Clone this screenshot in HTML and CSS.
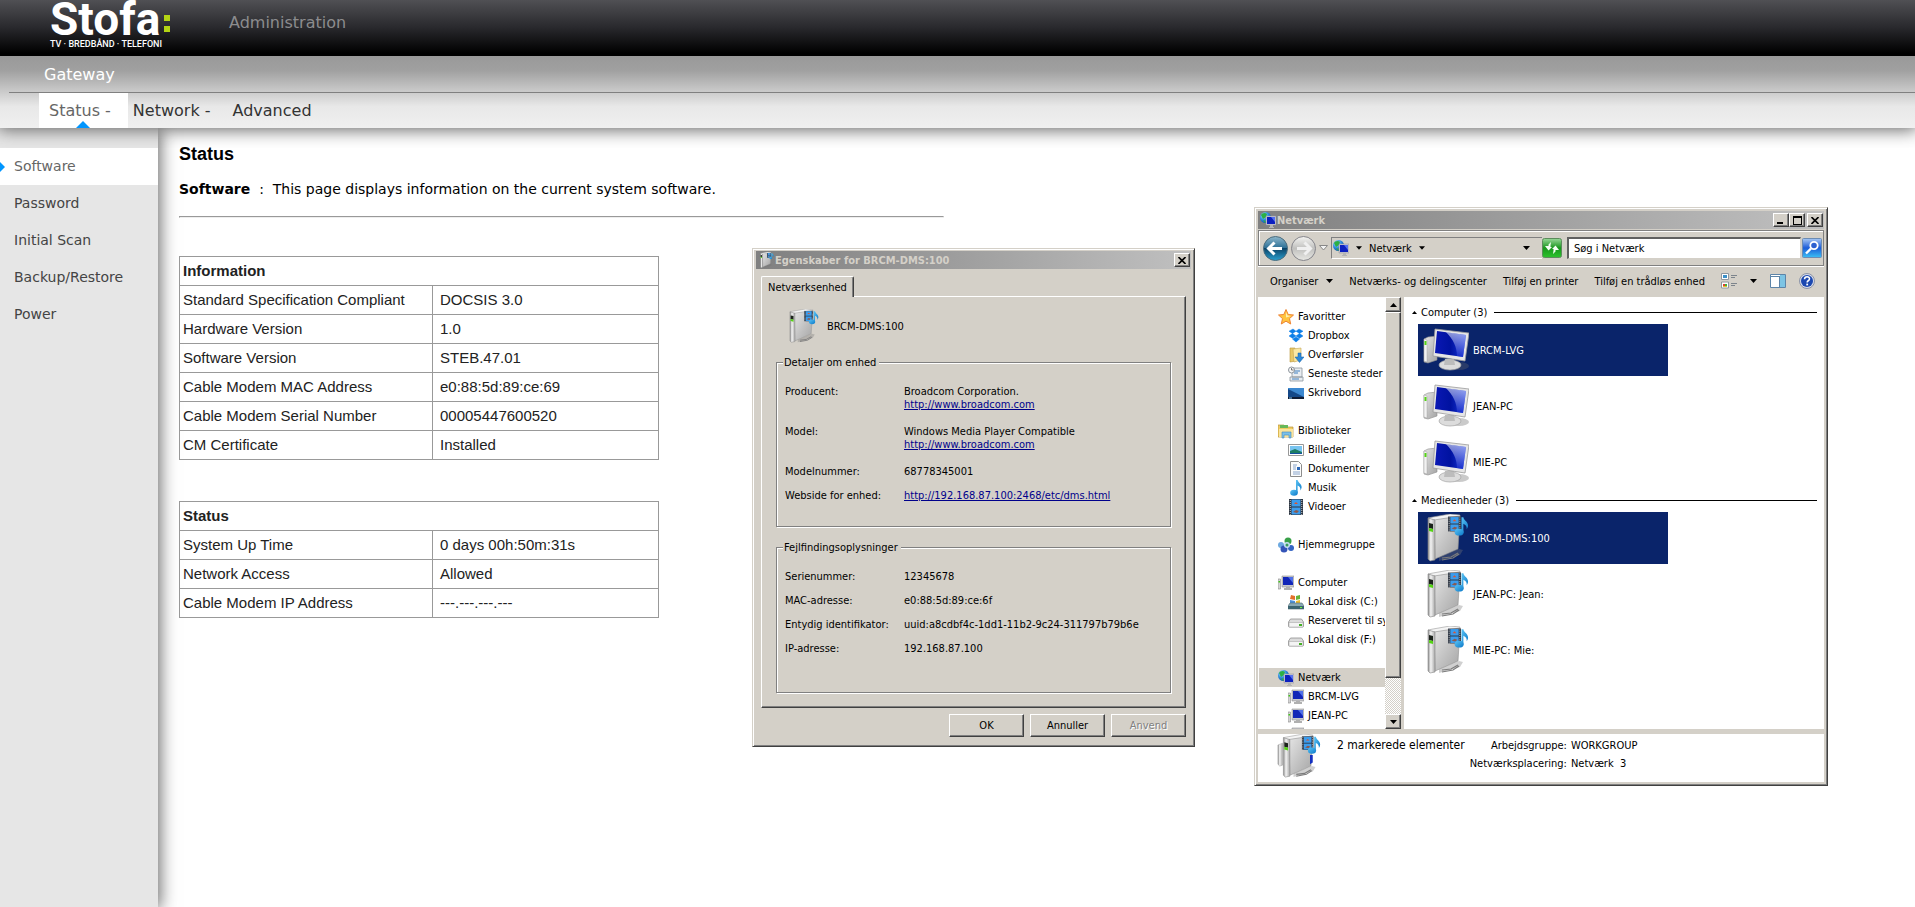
FILE: index.html
```
<!DOCTYPE html>
<html lang="da">
<head>
  <meta charset="UTF-8">
  <title>Stofa Gateway - Status</title>
  <link rel="stylesheet" href="styles.css">
</head>
<body>
  <!-- Icon set -->
  <svg class="defs" aria-hidden="true">
    <defs>
      <linearGradient id="g-case" x1="0" y1="0" x2="1" y2="1">
        <stop offset="0" stop-color="#e6e6e6"/><stop offset="0.5" stop-color="#c4c4c4"/><stop offset="1" stop-color="#a4a4a4"/>
      </linearGradient>
      <linearGradient id="g-side" x1="0" y1="0" x2="1" y2="0">
        <stop offset="0" stop-color="#8c8c8c"/><stop offset="0.4" stop-color="#f4f4f4"/><stop offset="1" stop-color="#a8a8a8"/>
      </linearGradient>
      <linearGradient id="g-screen" x1="0" y1="0" x2="1" y2="0">
        <stop offset="0" stop-color="#0a18b4"/><stop offset="0.5" stop-color="#0012a0"/><stop offset="1" stop-color="#1a3ae0"/>
      </linearGradient>
      <linearGradient id="g-glare" x1="0" y1="0" x2="0" y2="1">
        <stop offset="0" stop-color="#f0f4ff"/><stop offset="1" stop-color="#1a30d0"/>
      </linearGradient>
      <linearGradient id="g-note" x1="0" y1="0" x2="1" y2="1">
        <stop offset="0" stop-color="#5cc4f4"/><stop offset="1" stop-color="#0a78c8"/>
      </linearGradient>
      <radialGradient id="g-globe" cx="0.35" cy="0.3" r="0.8">
        <stop offset="0" stop-color="#bfeaff"/><stop offset="0.5" stop-color="#2e8fe0"/><stop offset="1" stop-color="#0a4aa0"/>
      </radialGradient>
      <linearGradient id="g-back" x1="0" y1="0" x2="0" y2="1">
        <stop offset="0" stop-color="#8fb8cc"/><stop offset="0.48" stop-color="#2c6f96"/><stop offset="0.5" stop-color="#0c4468"/><stop offset="1" stop-color="#2aa0d0"/>
      </linearGradient>
      <linearGradient id="g-fwd" x1="0" y1="0" x2="0" y2="1">
        <stop offset="0" stop-color="#f4f4f2"/><stop offset="0.5" stop-color="#c0c0be"/><stop offset="1" stop-color="#e8e8e4"/>
      </linearGradient>
      <linearGradient id="g-green" x1="0" y1="0" x2="0" y2="1">
        <stop offset="0" stop-color="#9ad89a"/><stop offset="0.5" stop-color="#18961c"/><stop offset="1" stop-color="#2cc42c"/>
      </linearGradient>
      <linearGradient id="g-blue" x1="0" y1="0" x2="0" y2="1">
        <stop offset="0" stop-color="#a8c8f4"/><stop offset="0.5" stop-color="#1c5cd8"/><stop offset="1" stop-color="#3cc0f4"/>
      </linearGradient>
    </defs>

    <symbol id="i-film" viewBox="0 0 14 16">
      <rect width="14" height="16" fill="#2c3440"/>
      <rect x="2.500" y=".5" width="9" height="7" fill="#3c9cec"/><rect x="2.500" y="8.500" width="9" height="7" fill="#3c9cec"/>
      <path d="M5 5l2-2 2 2z" fill="#e0542c"/><path d="M4 13l3-2 3 1-2 2z" fill="#8a5a50"/>
      <path d="M1.250 1v15M12.750 1v15" stroke="#e8ecf0" stroke-width=".8" stroke-dasharray="1 1"/>
    </symbol>
    <symbol id="i-note" viewBox="0 0 16 20">
      <path d="M8 0h2c.5 3.500 5.500 5 5 9.500-.2 1.500-.8 2.500-1.500 3.500.5-3-1-5-3.500-6v9H8z" fill="url(#g-note)"/>
      <ellipse cx="5.500" cy="16" rx="4.800" ry="3.700" fill="url(#g-note)"/>
    </symbol>
    <symbol id="i-media" viewBox="0 0 48 48">
      <path d="M18 47l21-6 3-5-4-1-20 8z" fill="#777" opacity=".35"/>
      <path d="M21 44l9-1 7-4M21 46l11-2 6-4" fill="none" stroke="#7c7c7c" stroke-width="1.200"/>
      <path d="M7 4l5-1 17-3 10 1v2L14 7z" fill="#f4f4f4" stroke="#9a9a9a" stroke-width=".6"/>
      <path d="M13 6l26-4-2 33-23 10z" fill="url(#g-case)" stroke="#8e8e8e" stroke-width=".6"/>
      <path d="M7 4l7 2v40l-5 1-2-2z" fill="url(#g-side)" stroke="#868686" stroke-width=".6"/>
      <path d="M8 9l4 1v5l-4-1z" fill="#1c221c"/>
      <path d="M8 14l4 1v3l-4-1z" fill="#54d414"/>
      <use href="#i-film" x="27" y="2" width="13" height="16"/>
      <use href="#i-note" x="33" y="2" width="15" height="21"/>
    </symbol>
    <symbol id="i-pc" viewBox="0 0 48 48">
      <ellipse cx="38" cy="40" rx="10" ry="4" fill="#666" opacity=".35"/>
      <path d="M3 13l4-2 9-1v24l-9 3-4-1z" fill="url(#g-case)" stroke="#8e8e8e" stroke-width=".6"/>
      <path d="M3 13l3 1v22l-3-1z" fill="#f2f2f2" stroke="#999" stroke-width=".4"/>
      <rect x="3.500" y="15" width="2" height="4" fill="#54d414"/>
      <ellipse cx="29" cy="39" rx="11" ry="5" fill="#dcdcdc" stroke="#a4a4a4" stroke-width=".7"/>
      <path d="M24 33h9l1 6H23z" fill="#bcbcbc"/>
      <path d="M14 3l34 4-4 28-32-5z" fill="#e6e6e6" stroke="#9a9a9a" stroke-width=".8"/>
      <path d="M16 5l29 4-3 22-28-4z" fill="url(#g-screen)"/>
      <path d="M25 6l20 3-3 22-6-1c0-9-4-17-11-24z" fill="url(#g-glare)" opacity=".6"/>
    </symbol>
    <symbol id="i-minipc" viewBox="0 0 16 16">
      <path d="M0 4h2.500v10H0z" fill="#d4d4d4" stroke="#888" stroke-width=".6"/><rect x=".5" y="6" width="1.500" height="1.500" fill="#3cc414"/>
      <path d="M4 1h12v11H4z" fill="#c8c8cc" stroke="#909090" stroke-width=".6"/>
      <path d="M5 2h10v8H5z" fill="#1226b8"/><path d="M10 2h5v6z" fill="#5070e8"/>
      <path d="M8 12h4v1h2v2H6v-2h2z" fill="#b0b0b0"/>
    </symbol>
    <symbol id="i-net" viewBox="0 0 16 16">
      <circle cx="5.500" cy="5.500" r="5.500" fill="url(#g-globe)"/>
      <path d="M1 3c1-2 4-3 6-1L6 5 3 7zM3 8l3 1-1 2z" fill="#2cb044"/>
      <path d="M6 4h10v9H6z" fill="#c8c8d4" stroke="#8c8c94" stroke-width=".5"/>
      <path d="M7 5h8v7H7z" fill="#0c20c0"/><path d="M11 5h4v5z" fill="#5470f0"/>
      <path d="M10 13h3v2h1v1H9v-1h1z" fill="#b4b4b4"/>
    </symbol>
    <symbol id="i-star" viewBox="0 0 16 16">
      <path d="M8 .5l2.200 5 5.300.5-4 3.600 1.200 5.400L8 12.200 3.300 15l1.200-5.400L.5 6l5.300-.5z" fill="#ffc440" stroke="#ee8434"/>
      <path d="M8 3l1.500 3.500L13 7 8 8.500z" fill="#fff0b4"/>
    </symbol>
    <symbol id="i-dropbox" viewBox="0 0 16 16">
      <path d="M5 1l3 2.200L4.500 5.500 1 3.200zM11 1l4 2.200-3.500 2.300L8 3.200zM4.500 5.500L8 8l-3.500 2.200L1 8zM11.500 5.500L15 8l-3.500 2.200L8 8zM4.500 11L8 9l3.500 2L8 14z" fill="#0c7ee8" stroke="#0c7ee8" stroke-width=".5"/>
    </symbol>
    <symbol id="i-download" viewBox="0 0 16 16">
      <path d="M2 1h5l1 13-6 1z" fill="#e8c868" stroke="#b89438" stroke-width=".6"/><path d="M5 2l8-1v12l-7 2z" fill="#fae8a4" stroke="#c4a454" stroke-width=".6"/>
      <path d="M10 6h3v4h3l-4.500 5.500L7 10h3z" fill="#2c88d8" stroke="#1460a8" stroke-width=".5"/>
    </symbol>
    <symbol id="i-recent" viewBox="0 0 16 16">
      <path d="M4 2h10v9H4zM2 11h13v4H2z" fill="#e8ecf0" stroke="#8c949c" stroke-width=".8"/><path d="M6 5h6M6 7h4M4 13h7" stroke="#4080c0"/>
      <circle cx="3.500" cy="4" r="3" fill="#f6f6f6" stroke="#8c949c"/><path d="M3.500 2v2h2" fill="none" stroke="#444" stroke-width=".7"/>
    </symbol>
    <symbol id="i-desktop" viewBox="0 0 16 16">
      <path d="M0 3h16v11H0z" fill="#144888"/><path d="M0 3h16v9L0 4z" fill="#3c88d0"/><path d="M0 12h16v2H0z" fill="#101c34"/><path d="M1 12.500h3v1H1z" fill="#7cc0f0"/>
    </symbol>
    <symbol id="i-library" viewBox="0 0 16 16">
      <path d="M0 2h6l1 2h8v10H0z" fill="#f0cc60" stroke="#b8943c" stroke-width=".7"/><path d="M2 2h8v3H2z" fill="#68b858"/>
      <path d="M1 6h14v8H1z" fill="#fae49c"/><path d="M4 15V9h9v6h-2v-3H6v3z" fill="#7cc0e8" stroke="#3c88c0" stroke-width=".6"/>
    </symbol>
    <symbol id="i-picture" viewBox="0 0 16 16">
      <path d="M.5 2.500h15v11H.5z" fill="#fff" stroke="#989898"/><path d="M2 4h12v8H2z" fill="#78c4f0"/><path d="M2 9l5-2 7 3v2H2z" fill="#1c7c64"/><path d="M2 11h12v1H2z" fill="#1450a0"/>
    </symbol>
    <symbol id="i-document" viewBox="0 0 16 16">
      <path d="M2.500 .5h8l3 3v12h-11z" fill="#fcfcfc" stroke="#8c8c8c"/><path d="M5 4h4M5 6h3M5 8h3M5 11h7M5 13h7" stroke="#6c90c0" stroke-width=".8"/><path d="M9 6h3v3H9z" fill="#2c68b8"/>
    </symbol>
    <symbol id="i-homegroup" viewBox="0 0 16 16">
      <circle cx="3" cy="8" r="3" fill="#6ca8e0"/><circle cx="10" cy="4" r="3.500" fill="#38a048"/><circle cx="6" cy="12" r="3.500" fill="#3454b8"/><circle cx="13" cy="11" r="3" fill="#3464c4"/>
      <circle cx="9" cy="8" r="3" fill="#c4dcf4"/><circle cx="9" cy="8" r="1.500" fill="#3c9c5c"/>
    </symbol>
    <symbol id="i-drivec" viewBox="0 0 16 16">
      <path d="M3 1l4 1v4L2 5z" fill="#e4702c"/><path d="M8 2l4-1v4l-4 1z" fill="#68b438"/><path d="M2 6l5 1v3H2z" fill="#4c90dc"/><path d="M8 7l4-1v4H8z" fill="#f0bc2c"/>
      <path d="M2 9h12l2 3v3H0v-3z" fill="#88a8b4" stroke="#50686f" stroke-width=".6"/><path d="M0 12h16v3H0z" fill="#3c6470"/><path d="M12 13h2v1h-2z" fill="#6cf03c"/>
    </symbol>
    <symbol id="i-drive" viewBox="0 0 16 16">
      <path d="M2.500 6h11l2 3v4q0 1-1 1h-13q-1 0-1-1V9z" fill="#dcdcdc" stroke="#909090" stroke-width=".8"/><path d="M1 9.500h14V14H1z" fill="#f4f4f4" stroke="#a0a0a0" stroke-width=".5"/><path d="M11 11h3v2h-3z" fill="#44b024"/>
    </symbol>
    <symbol id="i-down" viewBox="0 0 7 4"><path d="M0 0h7L3.500 4z"/></symbol>
    <symbol id="i-up" viewBox="0 0 7 4"><path d="M0 4h7L3.500 0z"/></symbol>
    <symbol id="i-close" viewBox="0 0 8 7"><path d="M.5 0l7 7M7.500 0l-7 7" stroke="#000" stroke-width="1.600"/></symbol>
    <symbol id="i-view" viewBox="0 0 16 16">
      <path d="M.5 .5h7v6h-7zM.5 9h7v6h-7z" fill="#fff" stroke="#9098a0"/><path d="M2 2h4v3H2z" fill="#3c90c8"/><path d="M2 11h2v2H2z" fill="#e04030"/><path d="M4 11h2v2H4z" fill="#3cb03c"/><path d="M2 13h4v1H2z" fill="#e8c030"/>
      <path d="M10 2.500h6M10 4.500h4M10 10.500h6M10 12.500h4" stroke="#7c848c"/>
    </symbol>
    <symbol id="i-pane" viewBox="0 0 16 14">
      <path d="M.5 .5h15v13H.5z" fill="#fff" stroke="#5c84a8"/><path d="M10 1h5v12h-5z" fill="#7cc4e4"/><path d="M9.500 3v10M1 2.500h9" stroke="#5c84a8"/>
    </symbol>
    <symbol id="i-help" viewBox="0 0 16 16">
      <circle cx="8" cy="8" r="7.500" fill="#d8dce8" stroke="#8c94a8"/><circle cx="8" cy="8" r="6" fill="#1c48b0"/>
      <path d="M5.500 6.200q.2-2.400 2.600-2.400t2.400 2q0 1.200-1.300 2-1 .6-1 1.600" fill="none" stroke="#fff" stroke-width="1.600"/><rect x="7.300" y="10.600" width="1.800" height="1.800" fill="#fff"/>
    </symbol>
  </svg>

  <header class="top">
    <a class="logo" href="#">
      <span class="logo-name">Stofa</span><span class="logo-dots"></span>
      <span class="logo-tag">TV · BREDBÅND · TELEFONI</span>
    </a>
    <a class="top-link" href="#">Administration</a>
  </header>

  <nav class="menu">
    <div class="menu-title">Gateway</div>
    <div class="menu-tabs">
      <a class="active" href="#">Status -</a>
      <a href="#">Network -</a>
      <a href="#">Advanced</a>
    </div>
  </nav>

  <div class="page">
    <nav class="sidebar">
      <a class="active" href="#">Software</a>
      <a href="#">Password</a>
      <a href="#">Initial Scan</a>
      <a href="#">Backup/Restore</a>
      <a href="#">Power</a>
    </nav>

    <main class="content">
      <h1>Status</h1>
      <p class="intro"><b>Software</b>&nbsp; :&nbsp; This page displays information on the current system software.</p>
      <hr>

      <table class="data">
        <tr><th colspan="2">Information</th></tr>
        <tr><td>Standard Specification Compliant</td><td>DOCSIS 3.0</td></tr>
        <tr><td>Hardware Version</td><td>1.0</td></tr>
        <tr><td>Software Version</td><td>STEB.47.01</td></tr>
        <tr><td>Cable Modem MAC Address</td><td>e0:88:5d:89:ce:69</td></tr>
        <tr><td>Cable Modem Serial Number</td><td>00005447600520</td></tr>
        <tr><td>CM Certificate</td><td>Installed</td></tr>
      </table>

      <table class="data">
        <tr><th colspan="2">Status</th></tr>
        <tr><td>System Up Time</td><td>0 days 00h:50m:31s</td></tr>
        <tr><td>Network Access</td><td>Allowed</td></tr>
        <tr><td>Cable Modem IP Address</td><td>---.---.---.---</td></tr>
      </table>
    </main>
  </div>

  <!-- Device properties dialog -->
  <section class="win dialog">
    <div class="titlebar">
      <svg class="ic16"><use href="#i-media"/></svg>
      <span class="title">Egenskaber for BRCM-DMS:100</span>
      <button class="cap" type="button" aria-label="Luk"><svg width="8" height="7"><use href="#i-close"/></svg></button>
    </div>
    <div class="dialog-body">
      <button class="tab" type="button">Netværksenhed</button>
      <div class="panel">
        <div class="device"><svg class="ic32"><use href="#i-media"/></svg>BRCM-DMS:100</div>
        <fieldset>
          <legend>Detaljer om enhed</legend>
          <dl>
            <dt>Producent:</dt><dd class="two">Broadcom Corporation.<br><a href="#">http://www.broadcom.com</a></dd>
            <dt>Model:</dt><dd class="two">Windows Media Player Compatible<br><a href="#">http://www.broadcom.com</a></dd>
            <dt>Modelnummer:</dt><dd>68778345001</dd>
            <dt>Webside for enhed:</dt><dd><a href="#">http://192.168.87.100:2468/etc/dms.html</a></dd>
          </dl>
        </fieldset>
        <fieldset class="trouble">
          <legend>Fejlfindingsoplysninger</legend>
          <dl>
            <dt>Serienummer:</dt><dd>12345678</dd>
            <dt>MAC-adresse:</dt><dd>e0:88:5d:89:ce:6f</dd>
            <dt>Entydig identifikator:</dt><dd>uuid:a8cdbf4c-1dd1-11b2-9c24-311797b79b6e</dd>
            <dt>IP-adresse:</dt><dd>192.168.87.100</dd>
          </dl>
        </fieldset>
      </div>
      <div class="dialog-buttons">
        <button type="button">OK</button>
        <button type="button">Annuller</button>
        <button type="button" disabled>Anvend</button>
      </div>
    </div>
  </section>

  <!-- Network explorer -->
  <section class="win explorer">
    <div class="titlebar">
      <svg class="ic16"><use href="#i-net"/></svg>
      <span class="title">Netværk</span>
      <button class="cap" type="button" aria-label="Minimer"><svg width="8" height="7"><path d="M0 5h6v2H0z"/></svg></button>
      <button class="cap" type="button" aria-label="Maksimer"><svg width="9" height="9"><path d="M0 0h9v9H0zM1 2v6h7V2z" fill-rule="evenodd"/></svg></button>
      <button class="cap last" type="button" aria-label="Luk"><svg width="8" height="7"><use href="#i-close"/></svg></button>
    </div>

    <div class="address">
      <button class="round" type="button" aria-label="Tilbage"><svg width="25" height="25" viewBox="0 0 25 25"><circle cx="12.500" cy="12.500" r="12" fill="url(#g-back)" stroke="#4c6c7c"/><path d="M11.500 6.500l-6 6 6 6M6 12.500h13" fill="none" stroke="#fff" stroke-width="3"/></svg></button>
      <button class="round" type="button" aria-label="Frem"><svg width="25" height="25" viewBox="0 0 25 25"><circle cx="12.500" cy="12.500" r="12" fill="url(#g-fwd)" stroke="#84848a"/><path d="M13.500 6.500l6 6-6 6M19 12.500H6" fill="none" stroke="#f0f0f0" stroke-width="3"/></svg></button>
      <svg class="recent" width="9" height="6" viewBox="0 0 9 6"><path d="M.5 .5h8L4.500 5z" fill="#f4f4f4" stroke="#888"/></svg>
      <div class="path">
        <svg class="ic16"><use href="#i-net"/></svg>
        <svg class="arr sm"><use href="#i-down"/></svg>
        <span>Netværk</span>
        <svg class="arr sm"><use href="#i-down"/></svg>
        <svg class="arr end"><use href="#i-down"/></svg>
      </div>
      <button class="square" type="button" aria-label="Opdater"><svg width="20" height="20" viewBox="0 0 20 20"><rect x=".5" y=".5" width="19" height="19" rx="2" fill="url(#g-green)" stroke="#5c8c5c"/><path d="M9 4L6.500 6.500V8H3l3.500 4.500L10 9H8.500V7.500zM11 16l2.500-2.500V12H17l-3.500-4.500L10 11h1.500v1.500z" fill="#f4fff4"/></svg></button>
      <input class="search" type="text" value="Søg i Netværk" aria-label="Søg i Netværk">
      <button class="square" type="button" aria-label="Søg"><svg width="20" height="20" viewBox="0 0 20 20"><rect x=".5" y=".5" width="19" height="19" rx="1" fill="url(#g-blue)" stroke="#6c8cb4"/><circle cx="12" cy="7.500" r="3.700" fill="#2c60d0" stroke="#fff" stroke-width="1.800"/><path d="M9 10.500l-5 5" stroke="#fff" stroke-width="2.400"/></svg></button>
    </div>

    <div class="toolbar">
      <button type="button">Organiser <svg class="arr"><use href="#i-down"/></svg></button>
      <button type="button">Netværks- og delingscenter</button>
      <button type="button">Tilføj en printer</button>
      <button type="button">Tilføj en trådløs enhed</button>
      <span class="tools">
        <svg class="ic16"><use href="#i-view"/></svg>
        <svg class="arr"><use href="#i-down"/></svg>
        <svg class="ic16"><use href="#i-pane"/></svg>
        <svg class="ic16"><use href="#i-help"/></svg>
      </span>
    </div>

    <div class="browse">
      <ul class="tree">
        <li><svg class="ic16"><use href="#i-star"/></svg>Favoritter</li>
        <li class="sub"><svg class="ic16"><use href="#i-dropbox"/></svg>Dropbox</li>
        <li class="sub"><svg class="ic16"><use href="#i-download"/></svg>Overførsler</li>
        <li class="sub"><svg class="ic16"><use href="#i-recent"/></svg>Seneste steder</li>
        <li class="sub"><svg class="ic16"><use href="#i-desktop"/></svg>Skrivebord</li>
        <li class="group"><svg class="ic16"><use href="#i-library"/></svg>Biblioteker</li>
        <li class="sub"><svg class="ic16"><use href="#i-picture"/></svg>Billeder</li>
        <li class="sub"><svg class="ic16"><use href="#i-document"/></svg>Dokumenter</li>
        <li class="sub"><svg class="ic16"><use href="#i-note"/></svg>Musik</li>
        <li class="sub"><svg class="ic16"><use href="#i-film"/></svg>Videoer</li>
        <li class="group"><svg class="ic16"><use href="#i-homegroup"/></svg>Hjemmegruppe</li>
        <li class="group"><svg class="ic16"><use href="#i-minipc"/></svg>Computer</li>
        <li class="sub"><svg class="ic16"><use href="#i-drivec"/></svg>Lokal disk (C:)</li>
        <li class="sub"><svg class="ic16"><use href="#i-drive"/></svg>Reserveret til sy</li>
        <li class="sub"><svg class="ic16"><use href="#i-drive"/></svg>Lokal disk (F:)</li>
        <li class="group current"><svg class="ic16"><use href="#i-net"/></svg>Netværk</li>
        <li class="sub"><svg class="ic16"><use href="#i-minipc"/></svg>BRCM-LVG</li>
        <li class="sub"><svg class="ic16"><use href="#i-minipc"/></svg>JEAN-PC</li>
        <li class="sub"><svg class="ic16"><use href="#i-minipc"/></svg></li>
      </ul>
      <div class="scroll">
        <button type="button" aria-label="Op"><svg class="arr"><use href="#i-up"/></svg></button>
        <div class="thumb"></div>
        <button type="button" aria-label="Ned"><svg class="arr"><use href="#i-down"/></svg></button>
      </div>
      <div class="files">
        <h2><svg width="5" height="3" viewBox="0 0 7 4"><use href="#i-up"/></svg>Computer (3)</h2>
        <div class="file selected"><svg class="ic48"><use href="#i-pc"/></svg>BRCM-LVG</div>
        <div class="file"><svg class="ic48"><use href="#i-pc"/></svg>JEAN-PC</div>
        <div class="file"><svg class="ic48"><use href="#i-pc"/></svg>MIE-PC</div>
        <h2><svg width="5" height="3" viewBox="0 0 7 4"><use href="#i-up"/></svg>Medieenheder (3)</h2>
        <div class="file selected"><svg class="ic48"><use href="#i-media"/></svg>BRCM-DMS:100</div>
        <div class="file"><svg class="ic48"><use href="#i-media"/></svg>JEAN-PC: Jean:</div>
        <div class="file"><svg class="ic48"><use href="#i-media"/></svg>MIE-PC: Mie:</div>
      </div>
    </div>

    <div class="details">
      <svg class="ic44" viewBox="0 0 48 48">
        <path d="M1 12l5-2v24l-3 1-2-2z" fill="url(#g-side)" stroke="#999" stroke-width=".5"/>
        <use href="#i-media" width="48" height="48"/>
        <path d="M36 23h3v8l-3 2z" fill="#1430c0"/>
      </svg>
      <strong>2 markerede elementer</strong>
      <dl>
        <dt>Arbejdsgruppe:</dt><dd>WORKGROUP</dd>
        <dt>Netværksplacering:</dt><dd>Netværk&nbsp; 3</dd>
      </dl>
    </div>
  </section>
</body>
</html>
```
FILE: styles.css
```
* {
  box-sizing: border-box;
}
body {
  margin: 0;
  min-height: 100vh;
  display: flex;
  flex-direction: column;
  position: relative;
  overflow-x: hidden;
  font-family: Verdana, "DejaVu Sans", sans-serif;
  font-size: 14px;
  color: #000;
  background: #fff;
}
a {
  text-decoration: none;
}
.defs {
  position: absolute;
  width: 0;
  height: 0;
}

/* Header */
.top {
  display: flex;
  height: 56px;
  padding-left: 50px;
  background: linear-gradient(#505054, #28282c 50%, #000 95%);
}
.logo {
  display: grid;
  grid-template-columns: max-content 6px;
  grid-template-rows: 38px 12px;
  column-gap: 4px;
  width: 179px;
  color: #fff;
  font-family: Roboto, sans-serif;
  font-weight: bold;
}
.logo-name {
  font-size: 46px;
  line-height: 38px;
}
.logo-dots {
  height: 17px;
  margin-top: 15px;
  background: linear-gradient(#b4d414 6px, transparent 6px, transparent 11px, #b4d414 11px);
}
.logo-tag {
  grid-column: 1 / 3;
  font-size: 9px;
  font-weight: 500;
  line-height: 12px;
}
.top-link {
  color: #8c8c8e;
  font-size: 16px;
  line-height: 46px;
}

/* Menu */
.menu {
  position: relative;
  z-index: 2;
  height: 72px;
  background: linear-gradient(#999, #a0a0a0 20%, #e8e8e8 70%, #f0f0f0);
  box-shadow: 0 0 16px 2px #666;
  clip-path: inset(0 0 -20px 0);
  font-size: 16px;
}
.menu-title {
  height: 37px;
  margin-left: 9px;
  padding-left: 35px;
  border-bottom: 1px solid #808080;
  color: #fff;
  line-height: 37px;
}
.menu-tabs {
  display: flex;
  margin-left: 39px;
}
.menu-tabs a {
  padding: 0 17px 0 5px;
  color: #333;
  line-height: 35px;
}
.menu-tabs .active {
  position: relative;
  padding-left: 10px;
  background: #fff;
  color: #666;
}
.menu-tabs .active::after {
  content: "";
  position: absolute;
  left: 50%;
  bottom: 0;
  margin-left: -7px;
  border: 7px solid transparent;
  border-top: 0;
  border-bottom-color: #0096ff;
}

/* Page columns */
.page {
  flex: 1;
  display: flex;
}
.sidebar {
  width: 158px;
  padding-top: 20px;
  background: #e6e6e6;
  box-shadow: 0 0 16px 2px #666;
}
.sidebar a {
  display: block;
  padding-left: 14px;
  color: #444;
  line-height: 37px;
}
.sidebar .active {
  position: relative;
  background: #fff;
  color: #666;
}
.sidebar .active::before {
  content: "";
  position: absolute;
  left: 0;
  top: 14px;
  border: 5px solid transparent;
  border-right: 0;
  border-left-color: #0096ff;
}
.content {
  flex: 1;
  padding: 16px 21px;
}
.content h1 {
  margin: 0 0 14px;
  font: bold 18px/20px Arial, "Liberation Sans", sans-serif;
}
.intro {
  margin: 0;
  line-height: 22px;
}
.content hr {
  width: 765px;
  margin: 16px 0 38px;
  border: 1px solid #999;
  border-right-color: #eee;
  border-bottom-color: #eee;
}
.data {
  width: 480px;
  margin-bottom: 41px;
  border-collapse: collapse;
  font: 15px/20px Arial, "Liberation Sans", sans-serif;
  color: #222;
}
.data th,
.data td {
  width: 253px;
  height: 29px;
  padding: 4px 3px;
  border: 1px solid #999;
  text-align: left;
}
.data td + td {
  width: auto;
  padding-left: 7px;
}

/* Classic windows */
.win {
  position: absolute;
  z-index: 3;
  padding: 3px;
  border: 1px solid #d4d0c8;
  border-right-color: #404040;
  border-bottom-color: #404040;
  background: #d4d0c8;
  box-shadow: inset 1px 1px #fff, inset -1px -1px #808080;
  font: 11px/13px Tahoma, "DejaVu Sans Condensed", sans-serif;
}
.win button,
.win input {
  font: inherit;
}
.win button {
  display: flex;
  align-items: center;
  justify-content: center;
  padding: 0;
  border: 0;
  background: none;
  color: #000;
  white-space: nowrap;
}
.win svg {
  flex: none;
}
.ic16 {
  width: 16px;
  height: 16px;
}
.ic32 {
  width: 34px;
  height: 34px;
}
.ic44 {
  width: 44px;
  height: 44px;
}
.ic48 {
  width: 48px;
  height: 48px;
}
.arr {
  width: 7px;
  height: 4px;
}
.arr.sm {
  width: 6px;
}
.titlebar {
  display: flex;
  align-items: center;
  height: 18px;
  padding: 0 1px 0 2px;
  background: linear-gradient(90deg, #808080, #c0c0c0);
}
.title {
  flex: 1;
  padding-left: 1px;
  color: #d4d0c8;
  font-weight: bold;
}
.win .cap,
.scroll button,
.thumb,
.dialog-buttons button {
  border: 1px solid #fff;
  border-right-color: #404040;
  border-bottom-color: #404040;
  background: #d4d0c8;
  box-shadow: inset -1px -1px #808080;
}
.win .cap {
  width: 16px;
  height: 14px;
}
.win .cap.last {
  margin-left: 2px;
}

/* Properties dialog */
.dialog {
  left: 752px;
  top: 248px;
  width: 443px;
  padding-top: 2px;
}
.dialog-body {
  padding: 7px 5px 6px;
}
.win .tab {
  position: relative;
  height: 21px;
  margin-bottom: -1px;
  padding: 0 6px;
  border: 1px solid #fff;
  border-right-color: #404040;
  border-bottom: 0;
  border-radius: 2px 2px 0 0;
  background: #d4d0c8;
  box-shadow: inset -1px 0 #808080;
}
.panel {
  padding: 12px 14px 14px;
  border: 1px solid #fff;
  border-right-color: #404040;
  border-bottom-color: #404040;
  box-shadow: inset -1px -1px #808080;
}
.device {
  display: flex;
  align-items: center;
  gap: 8px;
  margin: 0 0 13px 9px;
}
.panel fieldset {
  height: 171px;
  margin: 0 0 14px;
  padding: 16px 8px 0;
  border: 1px solid #808080;
  box-shadow: inset 1px 1px #fff, 1px 1px #fff;
}
.panel .trouble {
  height: 152px;
  margin: 0;
}
.panel legend {
  margin-left: -2px;
  padding: 0 3px 0 1px;
  background: #d4d0c8;
}
.panel dl {
  display: grid;
  grid-template-columns: 119px 1fr;
  row-gap: 11px;
  margin: 0;
}
.panel dd {
  margin: 0;
}
.panel dd.two {
  margin-bottom: 3px;
}
.panel dd a {
  color: #00008b;
  text-decoration: underline;
}
.dialog-buttons {
  display: flex;
  justify-content: flex-end;
  gap: 6px;
  margin-top: 6px;
}
.dialog-buttons button {
  width: 75px;
  height: 23px;
}
.dialog-buttons button:disabled {
  color: #808080;
  text-shadow: 1px 1px #fff;
}

/* Explorer */
.explorer {
  left: 1254px;
  top: 207px;
  width: 574px;
}
.address {
  display: flex;
  align-items: center;
  height: 36px;
  margin: 1px 0;
  padding: 0 1px 0 4px;
  border: 1px solid #808080;
  box-shadow: inset 1px 1px #fff, 0 1px #fff;
}
.address .round {
  margin-right: 3px;
}
.path {
  flex: 1;
  display: flex;
  align-items: center;
  height: 22px;
  margin: 0 0 0 3px;
  padding: 0 12px 0 1px;
  gap: 7px;
  border: 1px solid #808080;
  border-right: 0;
  border-bottom-color: #fff;
}
.path .end {
  margin-left: auto;
}
.search {
  width: 234px;
  height: 22px;
  margin: 0 1px 0 5px;
  padding: 0 5px;
  border: 2px solid #606060;
  border-right: 1px solid #d4d0c8;
  border-bottom: 1px solid #d4d0c8;
  border-radius: 0;
  background: #fff;
}
.toolbar {
  display: flex;
  align-items: center;
  gap: 16px;
  height: 30px;
  padding: 0 18px 2px 12px;
}
.toolbar .arr {
  margin-left: 8px;
}
.tools {
  display: flex;
  align-items: center;
  gap: 13px;
  margin-left: auto;
}
.tools .arr {
  margin-left: 0;
}
.browse {
  display: flex;
  height: 432px;
}
.tree {
  width: 127px;
  height: 432px;
  margin: 0;
  padding: 10px 0 0 1px;
  overflow: hidden;
  list-style: none;
  background: #fff;
}
.tree li {
  display: flex;
  align-items: center;
  gap: 4px;
  height: 19px;
  padding-left: 19px;
  white-space: nowrap;
}
.tree .sub {
  padding-left: 29px;
}
.tree .group {
  margin-top: 19px;
}
.tree .current {
  background: #d4d0c8;
}
.scroll {
  display: flex;
  flex-direction: column;
  width: 16px;
  background: repeating-conic-gradient(#fff 0 25%, #d4d0c8 0 50%) 0 0 / 2px 2px;
}
.scroll button {
  height: 15px;
}
.thumb {
  height: 366px;
  margin-bottom: auto;
}
.files {
  flex: 1;
  margin-left: 3px;
  padding: 3px 7px 0 8px;
  background: #fff;
}
.files h2 {
  display: flex;
  align-items: center;
  gap: 4px;
  height: 24px;
  margin: 0;
  font: inherit;
}
.files h2::after {
  content: "";
  flex: 1;
  margin-left: 3px;
  border-top: 1px solid #000;
}
.file {
  display: flex;
  align-items: center;
  gap: 4px;
  width: 250px;
  height: 52px;
  margin: 0 0 4px 6px;
  padding-left: 3px;
}
.file:last-child,
.file:has(+ h2) {
  margin-bottom: 0;
}
.file.selected {
  background: #0a246a;
  color: #fff;
}
.details {
  display: flex;
  align-items: flex-start;
  height: 48px;
  margin-top: 5px;
  padding-left: 19px;
  background: #fff;
}
.details strong {
  margin: 5px 5px 0 16px;
  font-size: 12px;
  font-weight: normal;
}
.details dl {
  display: grid;
  grid-template-columns: max-content max-content;
  gap: 5px 4px;
  margin: 5px 0 0;
}
.details dt {
  text-align: right;
}
.details dd {
  margin: 0;
}
```
